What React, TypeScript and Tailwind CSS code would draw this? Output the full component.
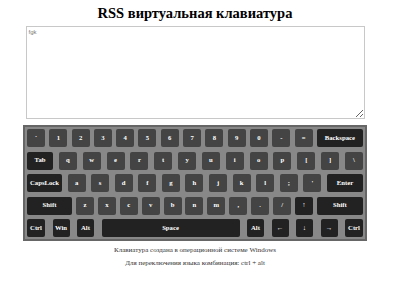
type K = { l: string; w: number; d?: boolean }

const n = (l: string): K => ({ l, w: 18 })
const s = (l: string, w: number): K => ({ l, w, d: true })

const rows: K[][] = [
    [..."`1234567890-=".split("").map(n), s("Backspace", 46)],
    [s("Tab", 26), ..."qwertyuiop[]\\".split("").map(n)],
    [s("CapsLock", 35), ..."asdfghjkl;'".split("").map(n), s("Enter", 36)],
    [s("Shift", 45), ..."zxcvbnm,./".split("").map(n), s("↑", 18), s("Shift", 46)],
    [s("Ctrl", 18), s("Win", 17), s("Alt", 17), s("Space", 138), s("Alt", 17), s("←", 17), s("↓", 17), s("→", 17), s("Ctrl", 18)],
]

export default function App() {
    return (
        <div className="flex w-[390px] flex-col items-center font-['Liberation_Serif',serif] text-black">
            <h1 className="mt-[4px] font-['Liberation_Serif',serif] text-[14.5px] font-bold leading-[18px]">{"RSS виртуальная клавиатура"}</h1>
            <textarea
                className="mt-[4px] h-[93px] w-[339px] border border-[#c8c8c8] px-[2px] py-[1px] font-['Liberation_Sans',sans-serif] text-[6px] leading-[8px] text-[#777] outline-none"
                defaultValue="fgk"
            />
            <div className="mt-[6px] flex w-[344px] flex-col gap-[4.5px] border-2 border-[#666] bg-[#888] p-[2px]">
                {rows.map((row, i) => (
                    <div key={i} className="flex justify-between">
                        {row.map((k, j) => (
                            <Key key={j} k={k} />
                        ))}
                    </div>
                ))}
            </div>
            <p className="mt-[3px] text-[7px] leading-[13px] text-[#333]">{"Клавиатура создана в операционной системе Windows"}</p>
            <p className="text-[7px] leading-[13px] text-[#333]">{"Для переключения языка комбинация: ctrl + alt"}</p>
        </div>
    )
}

function Key({ k }: { k: K }) {
    return (
        <div
            className={`flex h-[18px] items-center justify-center rounded-[2px] text-[6.7px] font-bold text-white ${k.d ? "bg-[#222]" : "bg-[#444]"}`}
            style={{ width: k.w }}
        >
            {k.l}
        </div>
    )
}
